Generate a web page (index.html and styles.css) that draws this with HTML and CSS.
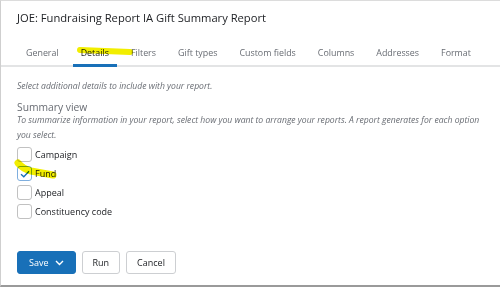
FILE: index.html
```html
<!DOCTYPE html>
<html lang="en">
<head>
    <meta charset="UTF-8">
    <title>Gift Summary Report</title>
    <link rel="stylesheet" href="styles.css">
</head>
<body>
    <div class="modal">
        <h1 class="judul">JOE: Fundraising Report IA Gift Summary Report</h1>

        <div class="tabs">
            <span class="tab">General</span>
            <span class="tab aktif">Details</span>
            <span class="tab">Filters</span>
            <span class="tab">Gift types</span>
            <span class="tab">Custom fields</span>
            <span class="tab">Columns</span>
            <span class="tab">Addresses</span>
            <span class="tab">Format</span>
        </div>

        <div class="isi">
            <p class="petunjuk">Select additional details to include with your report.</p>

            <h2 class="sub">Summary view</h2>
            <p class="petunjuk">To summarize information in your report, select how you want to arrange your reports. A report generates for each option you select.</p>

            <div class="pilihan">
                <label class="cek"><span class="kotak"></span>Campaign</label>
                <label class="cek"><span class="kotak dicentang">
                    <svg width="10" height="8" viewBox="0 0 10 8"><path d="M1 4.2 L3.8 6.8 L9 1.2" fill="none" stroke="#1870b8" stroke-width="1.3"/></svg>
                </span>Fund</label>
                <label class="cek"><span class="kotak"></span>Appeal</label>
                <label class="cek"><span class="kotak"></span>Constituency code</label>
            </div>
        </div>

        <div class="tombol-baris">
            <button class="btn btn-utama">Save
                <svg width="9" height="6" viewBox="0 0 9 6"><path d="M1 1 L4.5 4.5 L8 1" fill="none" stroke="#fff" stroke-width="1.4"/></svg>
            </button>
            <button class="btn">Run</button>
            <button class="btn">Cancel</button>
        </div>

        <!-- coretan stabilo kuning -->
        <svg class="stabilo" width="500" height="287" viewBox="0 0 500 287">
            <path d="M80 50 L130 52" stroke="#f2ee00" stroke-width="6" stroke-linecap="round" fill="none"/>
            <path d="M18 163 Q23 169 31 171 L53 175" stroke="#f2ee00" stroke-width="7" stroke-linecap="round" fill="none"/>
        </svg>
    </div>
</body>
</html>
```

FILE: styles.css
```css
body {
    margin: 0;
    background: #ffffff;
    font-family: "Open Sans", sans-serif;
    color: #212327;
}

.modal {
    position: relative;
    width: 500px;
    height: 287px;
    box-sizing: border-box;
    border-top: 1px solid #dcdcdc;
    border-left: 1px solid #cfcfcf;
    border-bottom: 2px solid #9a9a9a;
}

.judul {
    margin: 0;
    padding: 9px 16px 0 16px;
    font-size: 11.2px;
    font-weight: normal;
    height: 24px;
}

.tabs {
    display: flex;
    padding-left: 14px;
    margin-top: 12px;
    border-bottom: 2px solid #e3e4e5;
}

.tab {
    font-size: 8.9px;
    color: #686c73;
    padding: 0 8px 5px 8px;
    margin: 0 3px -2px 3px;
    border-bottom: 3px solid transparent;
}

.tab.aktif {
    color: #212327;
    border-bottom-color: #1870b8;
}

.isi {
    padding: 12px 16px 0 16px;
}

.petunjuk {
    margin: 0;
    font-size: 8.6px;
    font-style: italic;
    color: #686c73;
    line-height: 15px;
}

.sub {
    margin: 7px 0 0 0;
    font-size: 10.3px;
    font-weight: normal;
    color: #686c73;
    line-height: 12px;
}

.pilihan {
    display: flex;
    flex-direction: column;
    gap: 4px;
    margin-top: 4px;
}

.cek {
    display: flex;
    align-items: center;
    gap: 3px;
    font-size: 9px;
    color: #212327;
}

.kotak {
    width: 13px;
    height: 13px;
    border: 1px solid #c1c1c1;
    border-radius: 3px;
    display: flex;
    align-items: center;
    justify-content: center;
}

.kotak.dicentang {
    border-color: #7eaede;
}

.tombol-baris {
    display: flex;
    gap: 6px;
    padding: 0 16px;
    margin-top: 32px;
}

.btn {
    font-family: "Open Sans", sans-serif;
    font-size: 9px;
    height: 23px;
    padding: 0 10px;
    border: 1px solid #cdcfd2;
    border-radius: 3px;
    background: #ffffff;
    color: #212327;
}

.btn-utama {
    background: #1870b8;
    border-color: #1870b8;
    color: #ffffff;
    padding: 0 11px;
    display: flex;
    align-items: center;
    gap: 6px;
}

.stabilo {
    position: absolute;
    left: -1px;
    top: -1px;
    pointer-events: none;
    mix-blend-mode: multiply;
}
```
